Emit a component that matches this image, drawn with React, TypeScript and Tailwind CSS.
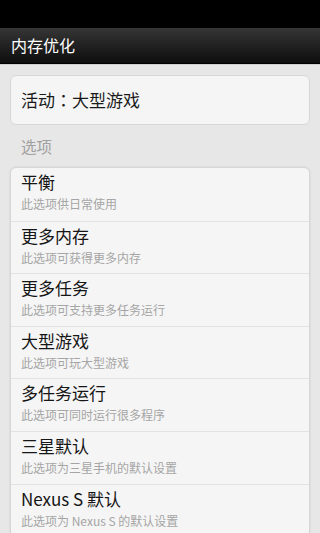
const options = [
  { title: '平衡', desc: '此选项供日常使用' },
  { title: '更多内存', desc: '此选项可获得更多内存' },
  { title: '更多任务', desc: '此选项可支持更多任务运行' },
  { title: '大型游戏', desc: '此选项可玩大型游戏' },
  { title: '多任务运行', desc: '此选项可同时运行很多程序' },
  { title: '三星默认', desc: '此选项为三星手机的默认设置' },
  { title: 'Nexus S 默认', desc: '此选项为 Nexus S 的默认设置' },
];

export default function App() {
  return (
    <div
      className="w-[320px] h-[533px] overflow-hidden bg-[#e7e7e7] flex flex-col"
      style={{ fontFamily: '"Noto Sans CJK SC", "Noto Sans", sans-serif' }}
    >
      {/* Status bar */}
      <div className="h-[28px] bg-black shrink-0" />

      {/* Title bar */}
      <div className="h-[36px] shrink-0 flex items-center px-[11px] bg-gradient-to-b from-[#363636] to-[#0e0e0e] border-b border-[#000]">
        <span className="text-[16px] text-white leading-none -mt-[1px]">内存优化</span>
      </div>
      <div className="h-[1px] bg-[#cfcfcf] shrink-0" />

      <div className="flex flex-col px-[10px] pt-[10px]">
        {/* Current mode */}
        <div className="h-[50px] flex items-center px-[10px] rounded-[6px] bg-[#f5f5f5] border border-[#d6d6d6]">
          <span className="text-[17px] text-[#1a1a1a] leading-none -mt-[1px]">
            活动<span className="font-['Noto_Sans_CJK_TC',sans-serif]">：</span>大型游戏
          </span>
        </div>

        <div className="h-[42px] flex items-center px-[11px] pt-[1px]">
          <span className="text-[15.5px] text-[#a0a0a0] leading-none">选项</span>
        </div>

        {/* Options list */}
        <div className="rounded-t-[6px] bg-[#f5f5f5] border border-[#d6d6d6] shadow-[0_0_3px_rgba(0,0,0,0.08)]">
          {options.map((opt, i) => (
            <div
              key={opt.title}
              className={`h-[52.6px] flex flex-col pt-[3px] px-[10px] ${
                i > 0 ? 'border-t border-[#e2e2e2]' : ''
              }`}
            >
              <span className="text-[17px] text-[#161616] leading-[22px]">{opt.title}</span>
              <span className="text-[12px] text-[#a5a5a5] leading-[16px] mt-[3px]">{opt.desc}</span>
            </div>
          ))}
        </div>
      </div>
    </div>
  );
}
